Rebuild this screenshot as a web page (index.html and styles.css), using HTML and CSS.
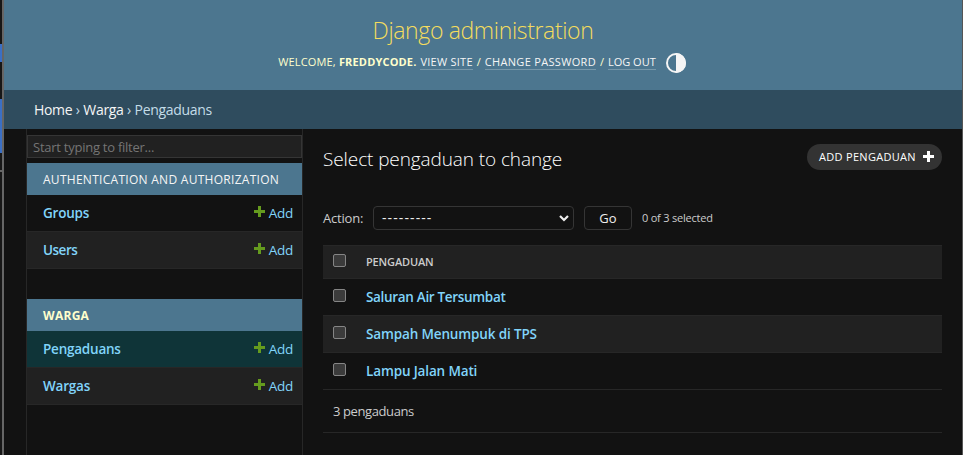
FILE: index.html
```html
<!DOCTYPE html>
<html lang="en">
<head>
<meta charset="utf-8">
<title>Select pengaduan to change | Django site admin</title>
<link rel="stylesheet" href="styles.css">
</head>
<body>
<div class="edge"><i class="mark mark-a"></i><i class="mark mark-b"></i><i class="rule"></i></div>
<div class="page">
  <header class="header">
    <h1 class="brand">Django administration</h1>
    <div class="tools">
      <span class="welcome">WELCOME, <strong>FREDDYCODE.</strong></span>
      <a class="view">VIEW SITE</a><span class="sep">/</span><a class="pass">CHANGE PASSWORD</a><span class="sep">/</span><a class="logout">LOG OUT</a>
      <svg class="theme" width="20" height="20" viewBox="0 0 20 20"><circle cx="10" cy="10" r="9" fill="none" stroke="#f5f5f5" stroke-width="2"/><path d="M10 0a10 10 0 0 1 0 20z" fill="#f5f5f5"/></svg>
    </div>
  </header>
  <nav class="crumbs"><a>Home</a> › <a>Warga</a> › Pengaduans</nav>
  <div class="body">
    <aside class="sidebar">
      <input class="filter" type="text" placeholder="Start typing to filter...">
      <section class="module">
        <h2 class="caption auth">AUTHENTICATION AND AUTHORIZATION</h2>
        <div class="model"><b class="groups">Groups</b><a class="add"><svg width="11" height="11" viewBox="0 0 11 11"><path d="M4 0h3v4h4v3H7v4H4V7H0V4h4z"/></svg>Add</a></div>
        <div class="model even"><b class="users">Users</b><a class="add"><svg width="11" height="11" viewBox="0 0 11 11"><path d="M4 0h3v4h4v3H7v4H4V7H0V4h4z"/></svg>Add</a></div>
      </section>
      <section class="module">
        <h2 class="caption current-app">WARGA</h2>
        <div class="model current"><b class="pengaduans">Pengaduans</b><a class="add"><svg width="11" height="11" viewBox="0 0 11 11"><path d="M4 0h3v4h4v3H7v4H4V7H0V4h4z"/></svg>Add</a></div>
        <div class="model even"><b class="wargas">Wargas</b><a class="add"><svg width="11" height="11" viewBox="0 0 11 11"><path d="M4 0h3v4h4v3H7v4H4V7H0V4h4z"/></svg>Add</a></div>
      </section>
    </aside>
    <main class="main">
      <div class="top">
        <h2 class="title">Select pengaduan to change</h2>
        <a class="addlink"><span>ADD PENGADUAN</span><svg width="11" height="11" viewBox="0 0 11 11"><path d="M4 0h3v4h4v3H7v4H4V7H0V4h4z"/></svg></a>
      </div>
      <div class="actions">
        <label class="label">Action:</label>
        <div class="select"><span>---------</span><svg width="10" height="7" viewBox="0 0 10 7"><path d="M1 1l4 4 4-4" fill="none" stroke="#eee" stroke-width="2.2"/></svg></div>
        <button class="go">Go</button>
        <span class="counter">0 of 3 selected</span>
      </div>
      <div class="table">
        <div class="row head"><i class="check"></i><span class="col">PENGADUAN</span></div>
        <div class="row"><i class="check"></i><b class="r1">Saluran Air Tersumbat</b></div>
        <div class="row even"><i class="check"></i><b class="r2">Sampah Menumpuk di TPS</b></div>
        <div class="row"><i class="check"></i><b class="r3">Lampu Jalan Mati</b></div>
      </div>
      <p class="paginator"><span>3 pengaduans</span></p>
    </main>
  </div>
</div>
</body>
</html>
```
FILE: styles.css
```css
* { box-sizing: border-box; }
body { margin: 0; width: 963px; height: 455px; overflow: hidden; display: flex; background: #121212; color: #eee; font: 13px/18px "Open Sans", "Noto Sans", sans-serif; }
h1, h2, p { margin: 0; font-weight: 400; }
.edge { width: 4px; border-right: 2px solid #666; display: flex; flex-direction: column; background: #171717; }
.mark { background: #3b6fc4; }
.mark-a { height: 18px; margin-top: 44px; }
.mark-b { height: 54px; margin-top: 37px; }
.rule { height: 2px; margin-top: 17px; background: #666; }
.page { width: 959px; border-right: 1px solid #555; display: flex; flex-direction: column; }
.header { height: 90px; background: #4c768f; display: flex; flex-direction: column; align-items: center; }
.brand { margin: 14px 0 0 0; height: 32px; font-size: 23px; line-height: 32px; font-weight: 300; color: #f5dd5d; white-space: nowrap; letter-spacing: -.35px; }
.tools { display: flex; align-items: center; height: 20px; margin: 7px 2px 0 0; font-size: 11px; line-height: 14px; color: #ffc; white-space: nowrap; }
.tools a { color: #f5f5f5; border-bottom: 1px solid #7798aa; }
.welcome { letter-spacing: .16px; margin-top: -2px; }
.tools a { margin-top: -2px; }
.view { margin-left: 4px; letter-spacing: .25px; }
.pass { letter-spacing: .32px; }
.sep { width: 12px; margin-top: -2px; text-align: center; }
.theme { margin-left: 10px; }
.crumbs { height: 39px; padding: 0 30px; background: #2f4c5e; color: #c4dce8; font-size: 14px; line-height: 39px; letter-spacing: -.33px; word-spacing: .3px; white-space: nowrap; }
.crumbs a { color: #f5f5f5; }
.body { flex: 1; display: flex; }
.sidebar { width: 277px; margin-left: 22px; padding-top: 6px; border: solid #272727; border-width: 0 1px; }
.filter { display: block; width: 275px; height: 23px; padding: 0 5px; border: 1px solid #353535; background: #212121; color: #eee; font: 13px "Open Sans", sans-serif; letter-spacing: -.25px; outline: 0; }
.filter::placeholder { color: #757575; }
.module { margin: 5px 0 30px; white-space: nowrap; }
.caption { height: 32px; padding-left: 16px; background: #4c768f; color: #f5f5f5; font-size: 12px; line-height: 33px; letter-spacing: .28px; }
.current-app { color: #ffc; font-weight: 700; }
.model { height: 37px; padding: 0 9px 0 16px; display: flex; justify-content: space-between; align-items: center; border-bottom: 1px solid #272727; color: #81d4fa; font-size: 13.5px; letter-spacing: -.22px; }
.model b, .row b { font-weight: 650; }
.users { letter-spacing: -.5px; }
.even { background: #212121; }
.current { background: #0f3438; }
.add { display: flex; align-items: center; gap: 4px; font-size: 13.5px; letter-spacing: -.3px; }
.add svg { fill: #659b1e; margin-top: -3px; }
.main { width: 619px; margin-left: 20px; white-space: nowrap; }
.top { height: 76px; padding-top: 15px; display: flex; justify-content: space-between; align-items: flex-start; }
.title { font-size: 19px; line-height: 30px; font-weight: 340; color: #fff; letter-spacing: -.1px; }
.addlink { width: 135px; height: 26px; padding: 0 8px 0 12px; border-radius: 13px; background: #333; color: #fff; font-size: 11px; letter-spacing: .3px; display: flex; align-items: center; justify-content: space-between; }
.addlink svg { fill: #fff; margin-top: -2px; }
.actions { height: 40px; display: flex; align-items: flex-start; line-height: 26px; color: #ccc; }
.label { width: 50px; letter-spacing: -.2px; }
.select { width: 201px; height: 24px; margin-top: 1px; padding: 0 4px 0 8px; border: 1px solid #353535; border-radius: 4px; display: flex; align-items: center; justify-content: space-between; color: #eee; font-size: 14px; letter-spacing: 1.1px; }
.go { width: 48px; height: 24px; margin: 1px 10px 0; padding: 0; border: 1px solid #353535; border-radius: 4px; background: #121212; color: #eee; font: 13px "Open Sans", sans-serif; }
.counter { font-size: 11px; letter-spacing: -.22px; }
.row { height: 37px; padding: 0 10px; display: flex; align-items: center; border-bottom: 1px solid #272727; color: #81d4fa; font-size: 13.5px; }
.r1 { letter-spacing: -.32px; }
.r2, .r3 { letter-spacing: -.14px; }
.head { height: 34px; border-top: 1px solid #272727; background: #212121; color: #ccc; font-size: 11px; }
.col { font-weight: 550; letter-spacing: -.15px; }
.check { width: 13px; height: 13px; margin: -3px 20px 0 0; border: 1px solid #858585; border-radius: 2px; background: #3b3b3b; }
.paginator { height: 43px; padding: 0 10px; border-bottom: 1px solid #272727; line-height: 43px; color: #ccc; letter-spacing: -.4px; }
```
